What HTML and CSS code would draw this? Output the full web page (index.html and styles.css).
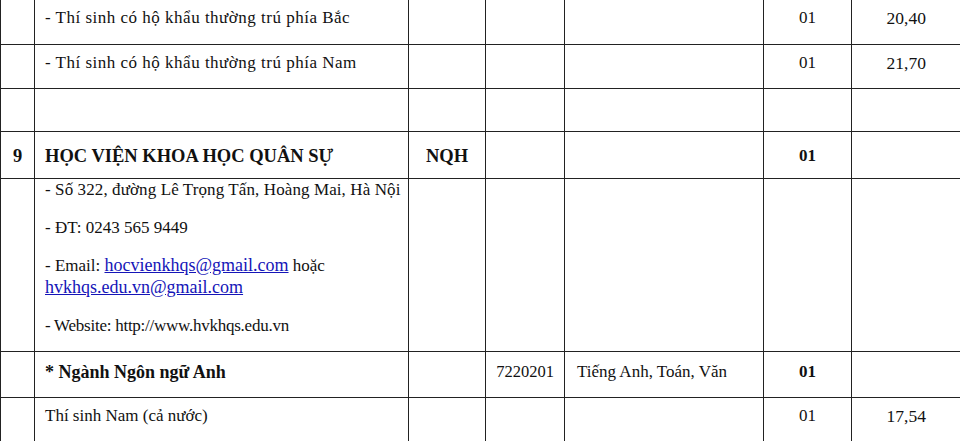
FILE: index.html
```html
<!DOCTYPE html>
<html lang="vi">
<head>
<meta charset="utf-8">
<link rel="stylesheet" href="styles.css">
</head>
<body>
<table class="grid">
  <colgroup>
    <col class="c-stt"><col class="c-name"><col class="c-code"><col class="c-major"><col class="c-combo"><col class="c-quota"><col class="c-score">
  </colgroup>
  <tr class="r-a">
    <td></td><td class="txt wide">- Thí sinh có hộ khẩu thường trú phía Bắc</td><td></td><td></td><td></td><td class="ctr">01</td><td class="ctr num">20,40</td>
  </tr>
  <tr class="r-b">
    <td></td><td class="txt wide">- Thí sinh có hộ khẩu thường trú phía Nam</td><td></td><td></td><td></td><td class="ctr">01</td><td class="ctr num">21,70</td>
  </tr>
  <tr class="r-c">
    <td></td><td></td><td></td><td></td><td></td><td></td><td></td>
  </tr>
  <tr class="r-d">
    <td class="ctr b big">9</td><td class="txt b big">HỌC VIỆN KHOA HỌC QUÂN SỰ</td><td class="ctr b big">NQH</td><td></td><td></td><td class="ctr b">01</td><td></td>
  </tr>
  <tr class="r-e">
    <td></td>
    <td class="txt info">
      <p class="addr">- Số 322, đường Lê Trọng Tấn, Hoàng Mai, Hà Nội</p>
      <p>- ĐT: 0243 565 9449</p>
      <p>- Email: <a href="#">hocvienkhqs@gmail.com</a> hoặc <a href="#">hvkhqs.edu.vn@gmail.com</a></p>
      <p class="web">- Website: http://www.hvkhqs.edu.vn</p>
    </td>
    <td></td><td></td><td></td><td></td><td></td>
  </tr>
  <tr class="r-f">
    <td></td><td class="txt b mid">* Ngành Ngôn ngữ Anh</td><td></td><td class="ctr code">7220201</td><td class="txt combo">Tiếng Anh, Toán, Văn</td><td class="ctr b">01</td><td></td>
  </tr>
  <tr class="r-g">
    <td></td><td class="txt">Thí sinh Nam (cả nước)</td><td></td><td></td><td></td><td class="ctr">01</td><td class="ctr num">17,54</td>
  </tr>
</table>
</body>
</html>
```

FILE: styles.css
```css
body {
  margin: 0;
  background: #ffffff;
  color: #111111;
  font-family: "Liberation Serif", "Times New Roman", serif;
  font-size: 17px;
}
.grid {
  font-family: "Liberation Serif", "Times New Roman", serif;
  border-collapse: collapse;
  table-layout: fixed;
  width: 960px;
}
.c-stt { width: 34px; }
.c-name { width: 374px; }
.c-code { width: 77px; }
.c-major { width: 79px; }
.c-combo { width: 199px; }
.c-quota { width: 88px; }
.c-score { width: 109px; }
.grid td {
  border: 1.5px solid #222222;
  vertical-align: top;
  padding: 8px 0 0 0;
  line-height: 20px;
}
.grid tr:first-child td { border-top: none; }
.grid td:last-child { border-right: none; }
.grid td.txt { padding-left: 10px; padding-right: 4px; }
.grid td.combo { padding-left: 12px; }
.ctr { text-align: center; }
.b { font-weight: bold; }
.big { font-size: 18.5px; }
.mid { font-size: 18px; }
.wide { letter-spacing: 0.5px; }
.num { font-size: 17.5px; }
.code { font-size: 16.5px; }
.r-a { height: 44px; }
.r-b { height: 44px; }
.r-c { height: 43px; }
.r-d { height: 47px; }
.r-d td { padding-top: 14px; }
.r-e { height: 173px; }
.r-e td { padding-top: 0; }
.r-f { height: 46px; }
.r-f td { padding-top: 10px; }
.r-g { height: 50px; }
.info p {
  margin: 0 0 16px 0;
  line-height: 22px;
}
.info p:last-child { margin-bottom: 0; }
.info a {
  color: #1515b8;
  text-decoration: underline;
  font-size: 18px;
  line-height: 16px;
}
.addr { letter-spacing: 0.1px; }
.web { letter-spacing: -0.25px; }
```
